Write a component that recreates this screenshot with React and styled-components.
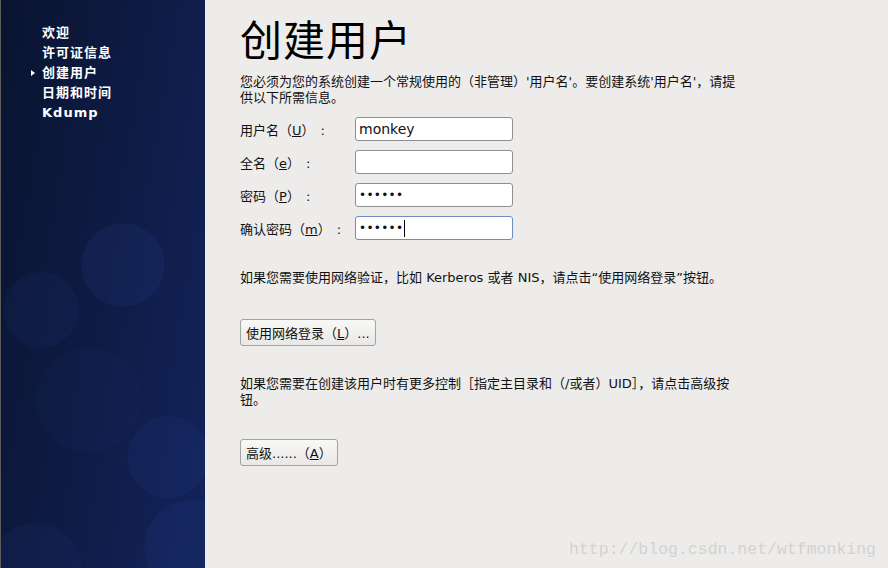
import React from 'react';
import styled, { createGlobalStyle } from 'styled-components';

const GlobalStyle = createGlobalStyle`
  html, body {
    margin: 0;
    padding: 0;
    background: #edeceb;
  }
  * {
    box-sizing: border-box;
  }
`;

const font = `"DejaVu Sans", "Noto Sans CJK SC", sans-serif`;

const Screen = styled.div`
  width: 888px;
  height: 568px;
  display: flex;
  position: relative;
  overflow: hidden;
  font-family: ${font};
  color: #111;
`;

const Sidebar = styled.nav`
  width: 205px;
  flex-shrink: 0;
  border-left: 1px solid #5c5c5c;
  padding: 23px 0 0 41px;
  background:
    radial-gradient(circle at 122px 265px, rgba(40, 66, 150, 0.16) 41px, transparent 42px),
    radial-gradient(circle at 40px 310px, rgba(40, 66, 150, 0.1) 37px, transparent 38px),
    radial-gradient(circle at 88px 400px, rgba(40, 66, 150, 0.05) 52px, transparent 53px),
    radial-gradient(circle at 167px 457px, rgba(40, 66, 150, 0.13) 40px, transparent 41px),
    radial-gradient(circle at 190px 547px, rgba(40, 66, 150, 0.14) 46px, transparent 47px),
    radial-gradient(circle at 34px 570px, rgba(40, 66, 150, 0.1) 46px, transparent 47px),
    linear-gradient(100deg, #0a1430 0%, #0e1b44 50%, #13245c 100%);
`;

const NavItem = styled.div`
  position: relative;
  height: 20px;
  line-height: 20px;
  font-size: 13px;
  font-weight: bold;
  color: #fff;
  letter-spacing: 1px;

  &::before {
    content: '';
    display: ${(p) => (p.$active ? 'block' : 'none')};
    position: absolute;
    left: -11px;
    top: 7px;
    border-left: 4px solid #fff;
    border-top: 3px solid transparent;
    border-bottom: 3px solid transparent;
  }
`;

const Main = styled.main`
  flex: 1;
  padding: 17px 0 0 35px;
  position: relative;
`;

const Title = styled.h1`
  margin: 0;
  font-size: 42px;
  line-height: 50px;
  font-weight: normal;
  letter-spacing: 1px;
  color: #000;
`;

const Para = styled.p`
  margin: ${(p) => p.$top}px 0 0;
  width: 502px;
  font-size: 13px;
  line-height: 16px;
`;

const Form = styled.div`
  display: grid;
  grid-template-columns: 115px 158px;
  row-gap: 9px;
  align-items: center;
  margin-top: 11px;
`;

const Label = styled.label`
  font-size: 13px;
`;

const Colon = styled.span`
  margin-left: 6px;
`;

const FieldBox = styled.div`
  height: 24px;
  display: flex;
  align-items: center;
  padding-left: 3px;
  background: #fff;
  border: 1px solid ${(p) => (p.$focused ? '#6d8ec4' : '#8f8f8f')};
  border-radius: 3px;
  font-size: ${(p) => (p.$secret ? '12px' : '14px')};
  letter-spacing: ${(p) => (p.$secret ? '0.3px' : '0')};
  color: #111;
`;

const Caret = styled.span`
  display: inline-block;
  width: 1px;
  height: 17px;
  background: #000;
  margin-left: 1px;
`;

const Button = styled.button`
  display: block;
  margin-top: ${(p) => p.$top}px;
  height: 27px;
  padding: 0 5px;
  font-family: ${font};
  font-size: 13px;
  color: #111;
  background: linear-gradient(#f8f8f7, #e9e8e6);
  border: 1px solid #a3a3a3;
  border-radius: 3px;
`;

const Watermark = styled.div`
  position: absolute;
  right: 12px;
  bottom: 9px;
  font-family: "Liberation Mono", monospace;
  font-size: 16.5px;
  color: #d3d2d0;
`;

const navItems = ['欢迎', '许可证信息', '创建用户', '日期和时间', 'Kdump'];

const fields = [
  { label: '用户名', key: 'U', value: 'monkey' },
  { label: '全名', key: 'e', value: '' },
  { label: '密码', key: 'P', value: '••••••', secret: true },
  { label: '确认密码', key: 'm', value: '••••••', secret: true, focused: true },
];

export default function App() {
  return (
    <Screen>
      <GlobalStyle />
      <Sidebar>
        {navItems.map((item) => (
          <NavItem key={item} $active={item === '创建用户'}>{item}</NavItem>
        ))}
      </Sidebar>
      <Main>
        <Title>创建用户</Title>
        <Para $top={7}>
          您必须为您的系统创建一个常规使用的（非管理）'用户名'。要创建系统'用户名'，请提供以下所需信息。
        </Para>
        <Form>
          {fields.map((f) => (
            <React.Fragment key={f.key}>
              <Label>{f.label}（<u>{f.key}</u>）<Colon>:</Colon></Label>
              <FieldBox $focused={f.focused} $secret={f.secret}>
                {f.value}
                {f.focused && <Caret />}
              </FieldBox>
            </React.Fragment>
          ))}
        </Form>
        <Para $top={30}>
          如果您需要使用网络验证，比如 Kerberos 或者 NIS，请点击“使用网络登录”按钮。
        </Para>
        <Button $top={33}>使用网络登录（<u>L</u>）...</Button>
        <Para $top={30}>
          如果您需要在创建该用户时有更多控制［指定主目录和（/或者）UID］，请点击高级按钮。
        </Para>
        <Button $top={31}>高级......（<u>A</u>）</Button>
        <Watermark>http://blog.csdn.net/wtfmonking</Watermark>
      </Main>
    </Screen>
  );
}
